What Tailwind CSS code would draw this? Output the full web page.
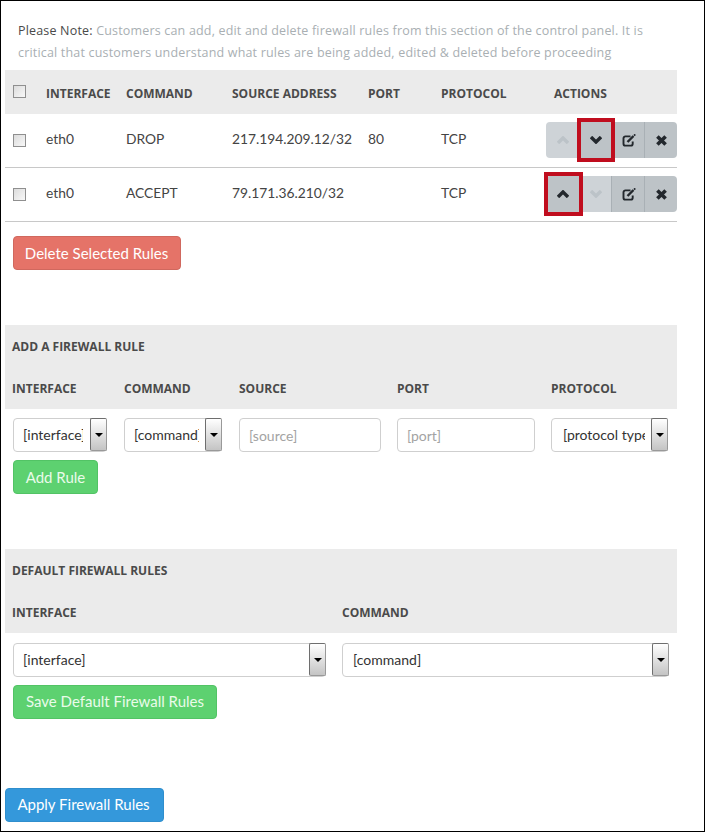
<!DOCTYPE html>
<html lang="en">

<head>
  <meta charset="UTF-8">
  <title>Firewall Rules</title>
  <script src="https://cdn.jsdelivr.net/npm/@tailwindcss/browser@4"></script>
</head>

<body class="bg-white">
  <div class="w-[705px] h-[832px] border border-black bg-white font-['Lato',sans-serif] text-[#34495e] overflow-hidden">
    <div class="pl-[4px] w-[676px]">

      <!-- note -->
      <p class="h-[69px] pt-[19px] pl-[13px] pr-[20px] text-[12.5px] leading-[22px] tracking-[0.18px] text-[#a9afb3] font-['Open_Sans',sans-serif]">
        <span class="text-[#4a4a4a]">Please Note:</span> Customers can add, edit and delete firewall rules from this section of the control panel. It is critical that customers understand what rules are being added, edited &amp; deleted before proceeding
      </p>

      <!-- rules table -->
      <div class="grid grid-cols-[41px_80px_106px_136px_73px_113px_123px] items-center h-[44px] pt-[4px] bg-[#ebebeb] text-[12px] font-bold text-[#4a4a4a] font-['Open_Sans',sans-serif]">
        <div class="pl-[8px] pb-[6px]"><div class="w-[13px] h-[13px] border border-[#8f8f8f] bg-gradient-to-br from-[#dcdcdc] to-[#f8f8f8]"></div></div>
        <div>INTERFACE</div>
        <div>COMMAND</div>
        <div>SOURCE ADDRESS</div>
        <div>PORT</div>
        <div>PROTOCOL</div>
        <div>ACTIONS</div>
      </div>

      <div class="grid grid-cols-[41px_80px_106px_136px_73px_105px_131px] items-center h-[54px] pb-px border-b border-[#c8c8c8] text-[13.8px] text-[#444]">
        <div class="pl-[8px]"><div class="w-[13px] h-[13px] border border-[#8f8f8f] bg-gradient-to-br from-[#dcdcdc] to-[#f8f8f8]"></div></div>
        <div class="pb-[2px]">eth0</div>
        <div class="pb-[2px]">DROP</div>
        <div class="pb-[2px]">217.194.209.12/32</div>
        <div class="pb-[2px]">80</div>
        <div class="pb-[2px]">TCP</div>
        <div class="relative flex h-[36px]">
          <div class="w-[34px] flex items-center justify-center bg-[#ced3d7] rounded-l-[4px]">
            <svg width="12" height="8" viewBox="0 0 12 8" fill="none" stroke="#bcc3c8" stroke-width="3.4"><path d="M1 7 6 2l5 5" /></svg>
          </div>
          <div class="w-[31px] flex items-center justify-center bg-[#bdc3c7]">
            <svg width="12" height="8" viewBox="0 0 12 8" fill="none" stroke="#23282d" stroke-width="3.4"><path d="M1 1l5 5 5-5" /></svg>
          </div>
          <div class="w-[33px] pl-px flex items-center justify-center bg-[#bdc3c7] border-l border-[#a9b0b5]">
            <svg width="14" height="13" viewBox="0 0 14 13" fill="none" stroke="#23282d" stroke-width="1.9"><path d="M8.5 2.4H3.4A1.9 1.9 0 0 0 1.5 4.3v5.4a1.9 1.9 0 0 0 1.9 1.9h5.4a1.9 1.9 0 0 0 1.9-1.9V7.4" /><path stroke-width="2.4" d="M5.5 8 11.5 2" /><circle cx="12.6" cy="1" r="1" fill="#23282d" stroke="none" /></svg>
          </div>
          <div class="w-[33px] flex items-center justify-center bg-[#bdc3c7] border-l border-[#a9b0b5] rounded-r-[4px]">
            <svg width="11" height="11" viewBox="0 0 11 11" fill="none" stroke="#23282d" stroke-width="3.6"><path d="M1.4 1.4l8.2 8.2M9.6 1.4l-8.2 8.2" /></svg>
          </div>
          <div class="absolute left-[31px] -top-[4px] w-[38px] h-[44px] border-4 border-[#c00d1e]"></div>
        </div>
      </div>

      <div class="grid grid-cols-[41px_80px_106px_136px_73px_105px_131px] items-center h-[54px] pb-px border-b border-[#c8c8c8] text-[13.8px] text-[#444]">
        <div class="pl-[8px]"><div class="w-[13px] h-[13px] border border-[#8f8f8f] bg-gradient-to-br from-[#dcdcdc] to-[#f8f8f8]"></div></div>
        <div class="pb-[2px]">eth0</div>
        <div class="pb-[2px]">ACCEPT</div>
        <div class="pb-[2px]">79.171.36.210/32</div>
        <div></div>
        <div class="pb-[2px]">TCP</div>
        <div class="relative flex h-[36px]">
          <div class="w-[34px] flex items-center justify-center bg-[#bdc3c7] rounded-l-[4px]">
            <svg width="12" height="8" viewBox="0 0 12 8" fill="none" stroke="#23282d" stroke-width="3.4"><path d="M1 7 6 2l5 5" /></svg>
          </div>
          <div class="w-[31px] flex items-center justify-center bg-[#ced3d7]">
            <svg width="12" height="8" viewBox="0 0 12 8" fill="none" stroke="#bcc3c8" stroke-width="3.4"><path d="M1 1l5 5 5-5" /></svg>
          </div>
          <div class="w-[33px] pl-px flex items-center justify-center bg-[#bdc3c7] border-l border-[#a9b0b5]">
            <svg width="14" height="13" viewBox="0 0 14 13" fill="none" stroke="#23282d" stroke-width="1.9"><path d="M8.5 2.4H3.4A1.9 1.9 0 0 0 1.5 4.3v5.4a1.9 1.9 0 0 0 1.9 1.9h5.4a1.9 1.9 0 0 0 1.9-1.9V7.4" /><path stroke-width="2.4" d="M5.5 8 11.5 2" /><circle cx="12.6" cy="1" r="1" fill="#23282d" stroke="none" /></svg>
          </div>
          <div class="w-[33px] flex items-center justify-center bg-[#bdc3c7] border-l border-[#a9b0b5] rounded-r-[4px]">
            <svg width="11" height="11" viewBox="0 0 11 11" fill="none" stroke="#23282d" stroke-width="3.6"><path d="M1.4 1.4l8.2 8.2M9.6 1.4l-8.2 8.2" /></svg>
          </div>
          <div class="absolute -left-[2px] -top-[4px] w-[39px] h-[44px] border-4 border-[#c00d1e]"></div>
        </div>
      </div>

      <div class="pl-[8px] pt-[14px]">
        <button class="h-[34px] w-[168px] pr-px rounded-[4px] bg-[#e57368] border border-[#d0685e] text-white text-[15px]">Delete Selected Rules</button>
      </div>

      <!-- add rule -->
      <div class="mt-[55px] h-[84px] pt-px bg-[#ebebeb] pl-[7px] text-[12px] font-bold text-[#4a4a4a] font-['Open_Sans',sans-serif]">
        <div class="h-[42px] flex items-center">ADD A FIREWALL RULE</div>
        <div class="h-[41px] grid grid-cols-[112px_115px_158px_154px_1fr] items-center">
          <div>INTERFACE</div>
          <div>COMMAND</div>
          <div>SOURCE</div>
          <div>PORT</div>
          <div>PROTOCOL</div>
        </div>
      </div>

      <div class="pt-[9px] pl-[8px] flex text-[14px]">
        <div class="w-[94px] h-[34px] flex border border-[#cfcfcf] rounded-[4px] bg-white">
          <div class="flex-1 overflow-hidden whitespace-nowrap ml-[9px] mr-[7px] leading-[32px] text-[#333]">[interface]</div>
          <div class="w-[17px] h-[33px] -mt-px -mr-px flex items-center justify-center border border-[#6e6e6e] border-r-[#999] border-b-[#999] rounded-[2px] bg-gradient-to-b from-white to-[#c4c4c4]"><div class="w-0 h-0 border-x-[4px] border-t-[4px] border-x-transparent border-t-black"></div></div>
        </div>
        <div class="ml-[17px] w-[98px] h-[34px] flex border border-[#cfcfcf] rounded-[4px] bg-white">
          <div class="flex-1 overflow-hidden whitespace-nowrap ml-[9px] mr-[6px] leading-[32px] text-[#333]">[command]</div>
          <div class="w-[17px] h-[33px] -mt-px -mr-px flex items-center justify-center border border-[#6e6e6e] border-r-[#999] border-b-[#999] rounded-[2px] bg-gradient-to-b from-white to-[#c4c4c4]"><div class="w-0 h-0 border-x-[4px] border-t-[4px] border-x-transparent border-t-black"></div></div>
        </div>
        <div class="ml-[17px] w-[142px] h-[34px] border border-[#cfcfcf] rounded-[4px] pl-[9px] leading-[33px] text-[#a3a3a3]">[source]</div>
        <div class="ml-[16px] w-[138px] h-[34px] border border-[#cfcfcf] rounded-[4px] pl-[9px] leading-[33px] text-[#a3a3a3]">[port]</div>
        <div class="ml-[16px] w-[117px] h-[34px] flex border border-[#cfcfcf] rounded-[4px] bg-white">
          <div class="flex-1 overflow-hidden whitespace-nowrap ml-[11px] mr-[6px] leading-[32px] text-[#333]">[protocol type]</div>
          <div class="w-[17px] h-[33px] -mt-px -mr-px flex items-center justify-center border border-[#6e6e6e] border-r-[#999] border-b-[#999] rounded-[2px] bg-gradient-to-b from-white to-[#c4c4c4]"><div class="w-0 h-0 border-x-[4px] border-t-[4px] border-x-transparent border-t-black"></div></div>
        </div>
      </div>

      <div class="pl-[8px] pt-[8px]">
        <button class="h-[34px] w-[85px] rounded-[4px] bg-[#5dd170] border border-[#52c365] text-[#eafbea] text-[15px]">Add Rule</button>
      </div>

      <!-- default rules -->
      <div class="mt-[55px] h-[84px] pt-px bg-[#ebebeb] pl-[7px] text-[12px] font-bold text-[#4a4a4a] font-['Open_Sans',sans-serif]">
        <div class="h-[42px] flex items-center">DEFAULT FIREWALL RULES</div>
        <div class="h-[41px] grid grid-cols-[330px_1fr] items-center">
          <div>INTERFACE</div>
          <div>COMMAND</div>
        </div>
      </div>

      <div class="pt-[10px] pl-[8px] flex text-[14px]">
        <div class="w-[313px] h-[34px] flex border border-[#cfcfcf] rounded-[4px] bg-white">
          <div class="flex-1 overflow-hidden whitespace-nowrap pl-[9px] leading-[32px] text-[#333]">[interface]</div>
          <div class="w-[17px] h-[33px] -mt-px -mr-px flex items-center justify-center border border-[#6e6e6e] border-r-[#999] border-b-[#999] rounded-[2px] bg-gradient-to-b from-white to-[#c4c4c4]"><div class="w-0 h-0 border-x-[4px] border-t-[4px] border-x-transparent border-t-black"></div></div>
        </div>
        <div class="ml-[16px] w-[327px] h-[34px] flex border border-[#cfcfcf] rounded-[4px] bg-white">
          <div class="flex-1 overflow-hidden whitespace-nowrap pl-[10px] leading-[32px] text-[#333]">[command]</div>
          <div class="w-[17px] h-[33px] -mt-px -mr-px flex items-center justify-center border border-[#6e6e6e] border-r-[#999] border-b-[#999] rounded-[2px] bg-gradient-to-b from-white to-[#c4c4c4]"><div class="w-0 h-0 border-x-[4px] border-t-[4px] border-x-transparent border-t-black"></div></div>
        </div>
      </div>

      <div class="pl-[8px] pt-[8px]">
        <button class="h-[34px] w-[204px] pb-[2px] rounded-[4px] bg-[#5dd170] border border-[#52c365] text-[#eafbea] text-[15px]">Save Default Firewall Rules</button>
      </div>

      <div class="pt-[69px]">
        <button class="h-[34px] w-[159px] pb-[2px] pr-[2px] rounded-[4px] bg-[#3498db] border border-[#2f8ecd] text-white text-[15px]">Apply Firewall Rules</button>
      </div>
    </div>
  </div>
</body>

</html>
